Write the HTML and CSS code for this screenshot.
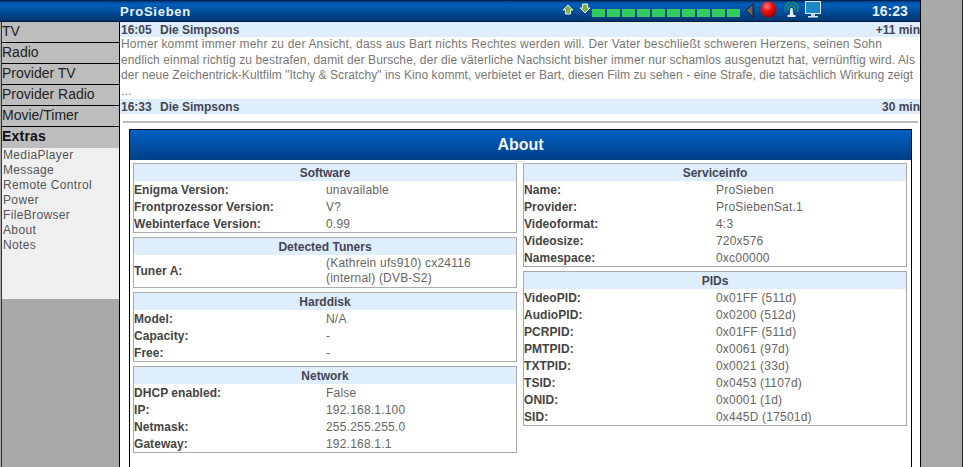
FILE: index.html
```html
<!DOCTYPE html>
<html lang="de">
<head>
<meta charset="utf-8">
<title>ProSieben - About</title>
<link rel="stylesheet" href="styles.css">
</head>
<body>
<div class="page">
  <div class="corner"></div>
  <header class="topbar">
    <div class="channel">ProSieben</div>
    <div class="status">
      <svg class="arrows" width="29" height="13" viewBox="0 0 29 13">
        <path d="M6 2 11 7H8.500V11H3.500V7H1Z" fill="#7fb04a" stroke="#e8f4e0"/>
        <path d="M20.500 1H25.500V5H28L23 10 18 5H20.500Z" fill="#7fb04a" stroke="#e8f4e0"/>
      </svg>
      <div class="meter">
        <i></i><i></i><i></i><i></i><i></i><i></i><i></i><i></i><i></i><i></i>
      </div>
      <svg class="speaker" width="9" height="15" viewBox="0 0 9 15"><path d="M8 1V14L1 7.500Z" fill="#666" stroke="#1a1a1a"/></svg>
      <svg class="rec" width="17" height="17" viewBox="0 0 17 17">
        <defs><radialGradient id="ball" cx=".4" cy=".3" r=".8"><stop offset="0" stop-color="#ff8080"/><stop offset=".4" stop-color="#ee1111"/><stop offset="1" stop-color="#880000"/></radialGradient></defs>
        <circle cx="8.500" cy="8.500" r="8" fill="url(#ball)"/>
      </svg>
      <svg class="antenna" width="15" height="16" viewBox="0 0 15 16">
        <path d="M2 10A6.500 6.500 0 1 1 13 10" fill="none" stroke="#1f9a5a" stroke-width="1.300"/>
        <path d="M4.500 8.500A3.500 3.500 0 1 1 10.500 8.500" fill="none" stroke="#1f9a5a" stroke-width="1.300"/>
        <path d="M6.500 6H8.500L9.500 13H5.500Z" fill="#e8e8e8"/>
        <rect x="3.500" y="13" width="8" height="2" fill="#e8e8e8"/>
      </svg>
      <svg class="monitor" width="16" height="17" viewBox="0 0 16 17">
        <rect x=".5" y=".5" width="15" height="12" fill="#1d88c8" stroke="#dfe6ea"/>
        <rect x="6" y="13" width="4" height="2" fill="#c8d0d4"/>
        <rect x="3" y="15" width="10" height="1.500" fill="#dfe6ea"/>
      </svg>
    </div>
    <div class="clock">16:23</div>
  </header>
  <div class="rightfill"></div>

  <nav class="sidebar">
    <a class="navitem">TV</a>
    <a class="navitem">Radio</a>
    <a class="navitem">Provider TV</a>
    <a class="navitem">Provider Radio</a>
    <a class="navitem">Movie/Timer</a>
    <a class="navitem navactive">Extras</a>
    <ul class="subnav">
      <li>MediaPlayer</li>
      <li>Message</li>
      <li>Remote Control</li>
      <li>Power</li>
      <li>FileBrowser</li>
      <li>About</li>
      <li>Notes</li>
    </ul>
  </nav>

  <main class="main">
    <div class="epgrow"><span class="epgtime">16:05</span><span class="epgtitle">Die Simpsons</span><span class="epgdur">+11 min</span></div>
    <p class="epgtext"><span class="wide">Homer kommt immer mehr zu der Ansicht, dass aus Bart nichts Rechtes werden will. Der Vater beschließt schweren Herzens, seinen Sohn</span><br>endlich einmal richtig zu bestrafen, damit der Bursche, der die väterliche Nachsicht bisher immer nur schamlos ausgenutzt hat, vernünftig wird. Als<br><span class="tight">der neue Zeichentrick-Kultfilm "Itchy &amp; Scratchy" ins Kino kommt, verbietet er Bart, diesen Film zu sehen - eine Strafe, die tatsächlich Wirkung zeigt</span><br>...</p>
    <div class="epgrow"><span class="epgtime">16:33</span><span class="epgtitle">Die Simpsons</span><span class="epgdur">30 min</span></div>
    <hr class="rule">
    <section class="about">
      <h1 class="abouttitle">About</h1>
      <div class="columns">
        <div class="column">
          <div class="box">
            <h2 class="boxtitle">Software</h2>
            <div class="row"><b>Enigma Version:</b><span>unavailable</span></div>
            <div class="row"><b>Frontprozessor Version:</b><span>V?</span></div>
            <div class="row"><b>Webinterface Version:</b><span>0.99</span></div>
          </div>
          <div class="box">
            <h2 class="boxtitle">Detected Tuners</h2>
            <div class="row rowtall"><b>Tuner A:</b><span>(Kathrein ufs910) cx24116<br>(internal) (DVB-S2)</span></div>
          </div>
          <div class="box">
            <h2 class="boxtitle">Harddisk</h2>
            <div class="row"><b>Model:</b><span>N/A</span></div>
            <div class="row"><b>Capacity:</b><span>-</span></div>
            <div class="row"><b>Free:</b><span>-</span></div>
          </div>
          <div class="box">
            <h2 class="boxtitle">Network</h2>
            <div class="row"><b>DHCP enabled:</b><span>False</span></div>
            <div class="row"><b>IP:</b><span>192.168.1.100</span></div>
            <div class="row"><b>Netmask:</b><span>255.255.255.0</span></div>
            <div class="row"><b>Gateway:</b><span>192.168.1.1</span></div>
          </div>
        </div>
        <div class="column">
          <div class="box">
            <h2 class="boxtitle">Serviceinfo</h2>
            <div class="row"><b>Name:</b><span>ProSieben</span></div>
            <div class="row"><b>Provider:</b><span>ProSiebenSat.1</span></div>
            <div class="row"><b>Videoformat:</b><span>4:3</span></div>
            <div class="row"><b>Videosize:</b><span>720x576</span></div>
            <div class="row"><b>Namespace:</b><span>0xc00000</span></div>
          </div>
          <div class="box">
            <h2 class="boxtitle">PIDs</h2>
            <div class="row"><b>VideoPID:</b><span>0x01FF (511d)</span></div>
            <div class="row"><b>AudioPID:</b><span>0x0200 (512d)</span></div>
            <div class="row"><b>PCRPID:</b><span>0x01FF (511d)</span></div>
            <div class="row"><b>PMTPID:</b><span>0x0061 (97d)</span></div>
            <div class="row"><b>TXTPID:</b><span>0x0021 (33d)</span></div>
            <div class="row"><b>TSID:</b><span>0x0453 (1107d)</span></div>
            <div class="row"><b>ONID:</b><span>0x0001 (1d)</span></div>
            <div class="row"><b>SID:</b><span>0x445D (17501d)</span></div>
          </div>
        </div>
      </div>
    </section>
  </main>
</div>
</body>
</html>
```

FILE: styles.css
```css
* { box-sizing: border-box; }
html, body { margin: 0; height: 100%; overflow: hidden; }
body { background: #a9a9a9; font-family: "Liberation Sans", Arial, sans-serif; font-size: 12px; color: #444; }

.page {
  display: grid;
  grid-template-columns: 120px 801px 42px;
  grid-template-rows: 22px 445px;
  width: 963px;
  height: 467px;
}

.corner, .topbar {
  background: linear-gradient(#003a7c 0, #0060bc 15%, #004a94 60%, #003570 100%);
  border-top: 1px solid #00234f;
  border-bottom: 1px solid #00193a;
}
.rightfill { grid-row: 1 / 3; grid-column: 3; background: #a9a9a9; border-right: 1px solid #222; }

.topbar { display: flex; align-items: center; border-right: 1px solid #000; }
.channel { width: 442px; color: #e8f2ff; font-size: 13px; font-weight: bold; letter-spacing: .75px; }
.status { display: flex; align-items: flex-start; height: 20px; }
.arrows { margin: 2px 0 0 0; }
.meter { display: flex; gap: 2px; margin: 8px 0 0 1px; }
.meter i { display: block; width: 13px; height: 8px; background: #32cc5e; }
.speaker { margin: 2px 0 0 5px; }
.rec { margin: 0 0 0 6px; }
.antenna { margin: 1px 0 0 7px; }
.monitor { margin: 0 0 0 6px; }
.clock { margin-left: auto; width: 48px; color: #e8f2ff; font-size: 14px; font-weight: bold; }

.sidebar { background: #a9a9a9; margin-left: 1px; border-left: 1px solid #333; border-right: 1px solid #000; align-self: stretch; }
.navitem {
  display: block;
  height: 21px;
  padding-left: 0;
  background: #bdbdbd;
  border-bottom: 1px solid #000;
  color: #222;
  font-size: 14px;
  line-height: 18px;
}
.navactive { border-bottom: 0; font-weight: bold; color: #111; letter-spacing: .2px; }
.subnav {
  list-style: none;
  margin: 0;
  padding: 0 0 0 1px;
  height: 151px;
  background: #efefef;
}
.subnav li { height: 15px; line-height: 15px; color: #555; letter-spacing: .35px; }

.main { background: #fff; border-right: 1px solid #000; overflow: hidden; }
.epgrow { display: flex; height: 15px; line-height: 17px; background: #dfeefc; font-weight: bold; color: #445; padding-left: 1px; }
.epgtime { width: 39px; }
.epgdur { margin-left: auto; }
.epgtext { margin: 0; line-height: 15.500px; height: 62px; color: #777; padding-left: 1px; white-space: nowrap; letter-spacing: .12px; }
.wide { letter-spacing: .18px; }
.tight { letter-spacing: .067px; }
.rule { height: 2px; margin: 7px 2px 0 3px; border: 0; background: #bbb; }
.about { margin: 6px 8px 0 9px; border: 1px solid #000; border-bottom: 0; height: 340px; }
.abouttitle {
  margin: 0;
  height: 30px;
  background: linear-gradient(#0062c4, #003f85);
  color: #eef5ff;
  font-size: 16px;
  font-weight: bold;
  text-align: center;
  line-height: 29px;
}
.columns { display: grid; grid-template-columns: 384px 384px; gap: 6px; padding: 3px 3px 0; }
.column { display: flex; flex-direction: column; gap: 4px; }
.box { border: 1px solid #aaa; }
.boxtitle {
  margin: 0;
  height: 17px;
  line-height: 18px;
  background: #dfeefc;
  color: #445;
  font-size: 12px;
  text-align: center;
}
.row { display: flex; height: 17px; line-height: 18px; }
.rowtall { height: 32px; line-height: 15px; align-items: center; }
.row b { width: 192px; color: #444; flex: none; letter-spacing: .05px; }
.row span { color: #666; letter-spacing: .2px; }
```
